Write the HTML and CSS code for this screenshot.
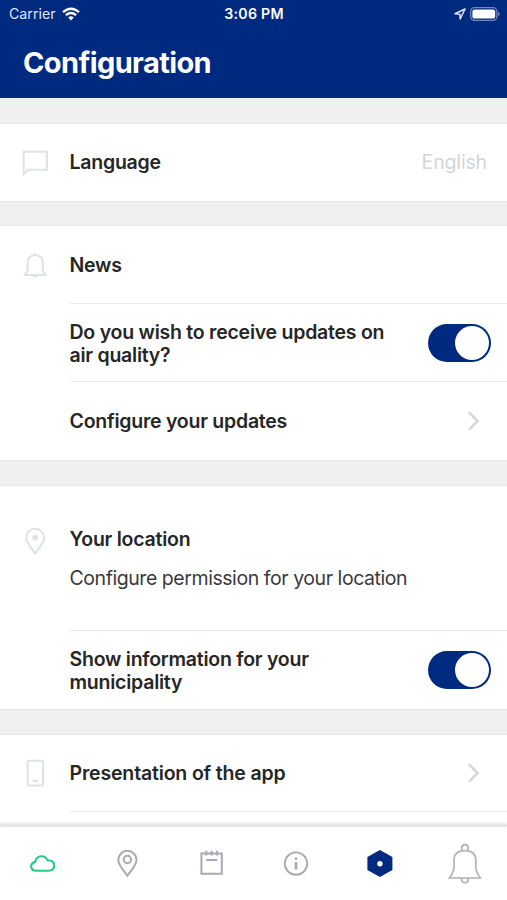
FILE: index.html
```html
<!DOCTYPE html>
<html lang="en">
<head>
<meta charset="utf-8">
<title>Configuration</title>
<link rel="stylesheet" href="styles.css">
</head>
<body>
<div class="app">
  <header class="header">
    <div class="status">
      <div class="status-left"><span class="carrier">Carrier</span>
        <svg width="18" height="14" viewBox="0 0 18 14" fill="none" stroke="#fff" stroke-width="2.4"><path d="M1 5.2Q9-1.7 17 5.2M3.9 8.2Q9 3.9 14.1 8.2"/><path d="M6.2 10.4Q9 8.2 11.8 10.4L9 13.4Z" fill="#fff" stroke="none"/></svg>
      </div>
      <span class="time">3:06 PM</span>
      <div class="status-right">
        <svg width="12" height="12" viewBox="0 0 12 12" fill="none" stroke="#dfe6fa" stroke-width="1.5" stroke-linejoin="round"><path d="M11 1L1 5.7l4.9.5L6.2 11Z"/></svg>
        <svg width="31" height="14" viewBox="0 0 31 14"><rect x=".7" y=".7" width="26.2" height="12.6" rx="3.8" fill="none" stroke="#7388c0" stroke-width="1.3"/><rect x="2.4" y="2.4" width="22.8" height="9.2" rx="2.2" fill="#fff"/><path d="M28.2 4.6q3 2.4 0 4.8z" fill="#7388c0"/></svg>
      </div>
    </div>
    <h1 class="title">Configuration</h1>
  </header>
  <main class="settings">
    <section class="group">
      <div class="row short">
        <svg class="row-icon" width="28" height="28" viewBox="0 0 28 28"><path d="M2.7 2.7H25.9V20.8H7L2.7 24.9Z"/></svg>
        <div class="cell"><span class="label">Language</span><span class="value">English</span></div>
      </div>
    </section>
    <section class="group">
      <div class="row short">
        <svg class="row-icon" width="28" height="28" viewBox="0 0 28 28"><path d="M3.8 23.9H24.6L21.8 20V11.5Q21.8 4.8 14.2 3.9Q6.6 4.8 6.6 11.5V20ZM14.2 2V4.5M12.2 24.2Q14.2 27.5 16.2 24.2"/></svg>
        <div class="cell"><span class="label lowered">News</span></div>
      </div>
      <div class="row">
        <div class="cell ruled"><span class="label lowered">Do you wish to receive updates on<br>air quality?</span><span class="switch"><span class="knob"></span></span></div>
      </div>
      <div class="row last">
        <div class="cell ruled"><span class="label">Configure your updates</span><svg class="chevron" width="14" height="22" viewBox="0 0 14 22"><path d="M2 2.3L10.5 11L2 19.7"/></svg></div>
      </div>
    </section>
    <section class="group">
      <div class="row tall">
        <svg class="row-icon" width="28" height="28" viewBox="0 0 28 28"><path d="M14.2 26.5C10.7 21.5 5.2 15.5 5.2 10.7A9 9 0 0 1 23.2 10.7C23.2 15.5 17.7 21.5 14.2 26.5Z"/><circle class="filled" cx="14.2" cy="10.6" r="2.8"/></svg>
        <div class="cell stacked"><span class="label">Your location</span><span class="detail">Configure permission for your location</span></div>
      </div>
      <div class="row last">
        <div class="cell ruled"><span class="label lowered">Show information for your<br>municipality</span><span class="switch"><span class="knob"></span></span></div>
      </div>
    </section>
    <section class="group">
      <div class="row shorter">
        <svg class="row-icon" width="28" height="28" viewBox="0 0 28 28"><rect x="6.6" y="1.8" width="15.4" height="24.8" rx="1.5"/><path d="M11.5 21.8H17"/></svg>
        <div class="cell"><span class="label presentation">Presentation of the app</span><svg class="chevron" width="14" height="22" viewBox="0 0 14 22"><path d="M2 2.3L10.5 11L2 19.7"/></svg></div>
      </div>
      <div class="row"><div class="cell ruled"></div></div>
    </section>
  </main>
  <nav class="tabs">
    <a class="tab"><svg width="28" height="28" viewBox="0 0 28 28" fill="none" stroke="#20cb8c" stroke-width="2.1"><path d="M7.8 20.7Q2.9 20.3 3.1 16.3Q3.3 12.7 7.1 12.1Q8.3 6 13.7 6.2Q17.8 6.3 19.5 10.3Q25.9 10.2 26.3 15.5Q26 20.7 20.7 20.7Z"/></svg></a>
    <a class="tab"><svg width="28" height="28" viewBox="0 0 28 28" fill="none" stroke="#a9a9b3" stroke-width="2"><path d="M14.4 25.8C11 20.8 5.3 15.1 5.3 9.9A9.1 9.1 0 0 1 23.5 9.9C23.5 15.1 17.8 20.8 14.4 25.8Z"/><circle cx="14.4" cy="9.5" r="3.7"/></svg></a>
    <a class="tab"><svg width="28" height="28" viewBox="0 0 28 28" fill="none" stroke="#a9a9b3" stroke-width="2"><path d="M4.4 3.6H24.8V23.8H4.4ZM9.3 .8V5.6M14.6 .8V5.6M19.9 .8V5.6M9.2 10H20.1"/></svg></a>
    <a class="tab"><svg width="28" height="28" viewBox="0 0 28 28" fill="none" stroke="#a9a9ae" stroke-width="1.9"><circle cx="14" cy="13.6" r="11.2"/><path d="M14 12V19.6M14 7.6V9.8" stroke-width="2.6"/></svg></a>
    <a class="tab"><svg width="28" height="28" viewBox="0 0 28 28"><path d="M13.9.1L26.4 6.9V20.1L13.9 26.9L1.4 20.1V6.9Z" fill="#002980"/><circle cx="13.9" cy="13.7" r="2.7" fill="#fff"/></svg></a>
    <a class="tab"><svg width="36" height="42" viewBox="0 0 36 42" fill="none" stroke="#b1b1b7" stroke-width="1.7"><path d="M2.5 35H33.3Q28.8 28.5 28.8 24V17.5Q28.8 7.7 18 7.7Q7 7.7 7 17.5V24Q7 28.5 2.5 35ZM14.9 7.9V4.5Q14.9 1.6 18 1.6Q21 1.6 21 4.5V7.9M14.5 35.5Q14.5 39.7 18 39.7Q21.4 39.7 21.4 35.5"/></svg></a>
  </nav>
</div>
</body>
</html>
```

FILE: styles.css
```css
* { box-sizing: border-box; }
body { margin: 0; background: #fff; font-family: Inter, "Liberation Sans", sans-serif; color: #262626; }
.app { width: 507px; height: 900px; display: flex; flex-direction: column; overflow: hidden; }
.header { flex: none; height: 98px; background: #002980; color: #fff; }
.status { display: grid; grid-template-columns: 1fr auto 1fr; align-items: center; height: 27px; padding: 0 6px 0 9px; font-size: 14.2px; line-height: 18px; }
.status-left, .status-right { display: flex; align-items: center; gap: 6px; }
.status-right { justify-content: flex-end; gap: 4px; }
.carrier { color: #dfe6fa; }
.time { font-weight: 600; letter-spacing: .25px; margin-right: 2px; }
.title { margin: 18px 0 0 23px; font-size: 29px; line-height: 36px; font-weight: 700; letter-spacing: -.6px; }
.settings { flex: 1; min-height: 0; overflow: hidden; background: #f0f0f0; padding-top: 25px; display: flex; flex-direction: column; gap: 24px; }
.group { flex: none; background: #fff; border-top: 1px solid #e6e6e6; border-bottom: 1px solid #e6e6e6; }
.group:first-child { margin-bottom: -1px; }
.row { display: flex; align-items: center; height: 78px; padding-left: 21px; }
.row.short { height: 77px; }
.row.shorter { height: 76px; }
.row.last { height: 79px; }
.row.tall { height: 144px; align-items: flex-start; }
.row-icon { flex: none; width: 28px; height: 28px; margin-right: 20.5px; fill: none; stroke: #dfe2e3; stroke-width: 2; }
.filled { fill: #dfe2e3; stroke: none; }
.tall .row-icon { margin-top: 41px; }
.cell { flex: 1; align-self: stretch; display: flex; align-items: center; justify-content: space-between; padding-right: 16px; }
.ruled { margin-left: 48.5px; border-top: 1px solid #e8e8e8; }
.label { font-size: 19.5px; line-height: 23px; font-weight: 600; letter-spacing: -.24px; }
.lowered { padding-top: 2px; }
.presentation { letter-spacing: -.16px; }
.value { color: #d4d5d9; font-size: 19.5px; line-height: 23px; letter-spacing: -.15px; margin-right: 4px; }
.stacked { flex-direction: column; align-items: flex-start; justify-content: flex-start; gap: 16px; padding-top: 42px; }
.detail { font-size: 19.5px; line-height: 23px; letter-spacing: -.44px; color: #3a3a3a; }
.switch { flex: none; width: 63px; height: 38px; border-radius: 19px; background: #002980; padding: 2px; display: flex; justify-content: flex-end; }
.knob { width: 34px; height: 34px; border-radius: 50%; background: #fff; }
.chevron { margin-right: 10px; fill: none; stroke: #d9d9d9; stroke-width: 2.8; }
.tabs { flex: none; height: 73px; background: #fff; display: flex; box-shadow: 0 -4px 2px rgba(0,0,0,.1); position: relative; }
.tab { flex: 1; display: flex; align-items: center; justify-content: center; }
```
